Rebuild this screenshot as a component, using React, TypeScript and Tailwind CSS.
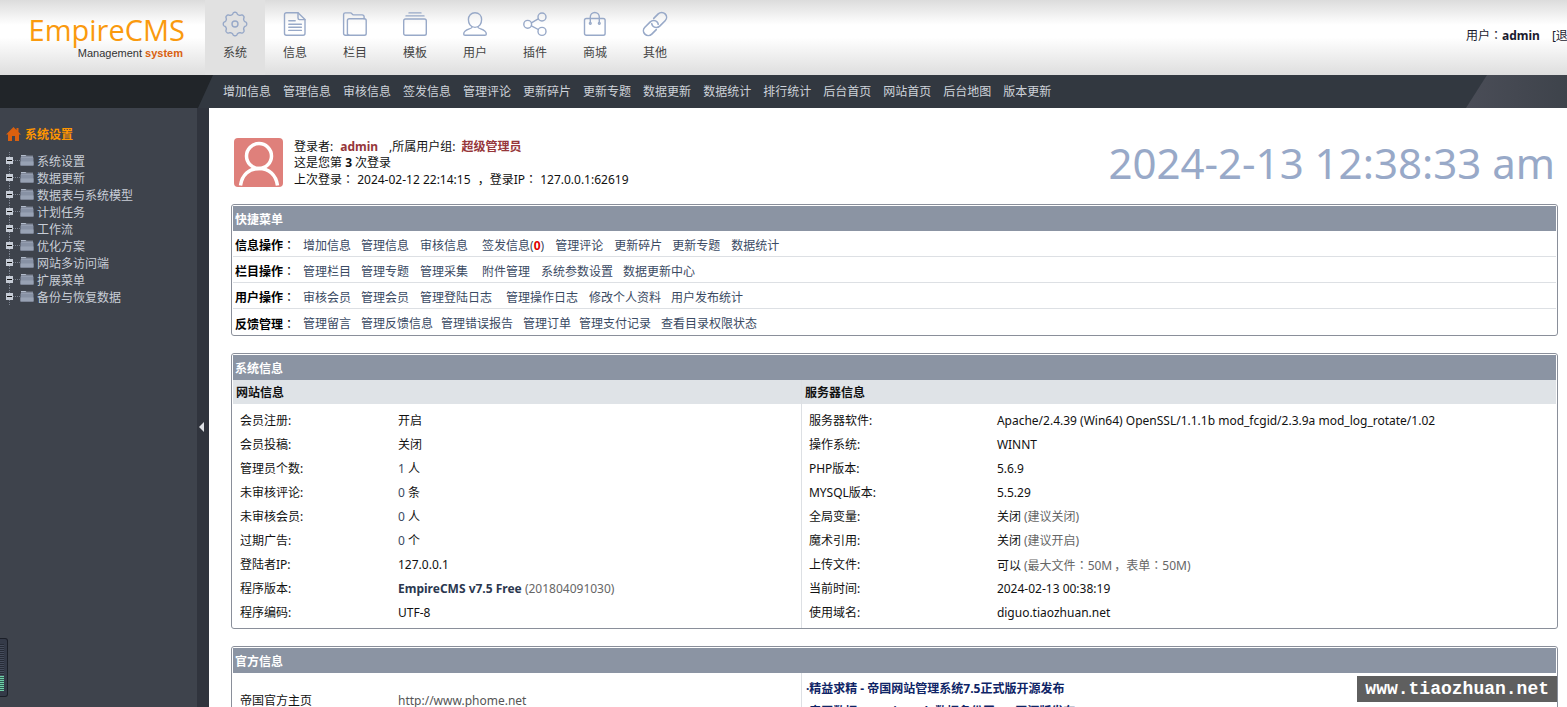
import type { ReactNode } from "react";

type Pair = { label: string; value: ReactNode };
type QuickLink = { text: string; gap: string; count?: number };

const modules = ["系统", "信息", "栏目", "模板", "用户", "插件", "商城", "其他"];

const subMenu = [
  "增加信息",
  "管理信息",
  "审核信息",
  "签发信息",
  "管理评论",
  "更新碎片",
  "更新专题",
  "数据更新",
  "数据统计",
  "排行统计",
  "后台首页",
  "网站首页",
  "后台地图",
  "版本更新",
];

const treeItems = [
  "系统设置",
  "数据更新",
  "数据表与系统模型",
  "计划任务",
  "工作流",
  "优化方案",
  "网站多访问端",
  "扩展菜单",
  "备份与恢复数据",
];

const quickMenu: { label: string; links: QuickLink[] }[] = [
  {
    label: "信息操作",
    links: [
      { text: "增加信息", gap: "" },
      { text: "管理信息", gap: "ml-[10px]" },
      { text: "审核信息", gap: "ml-[11px]" },
      { text: "签发信息", gap: "ml-[14px]", count: 0 },
      { text: "管理评论", gap: "ml-[11px]" },
      { text: "更新碎片", gap: "ml-[11px]" },
      { text: "更新专题", gap: "ml-[10px]" },
      { text: "数据统计", gap: "ml-[11px]" },
    ],
  },
  {
    label: "栏目操作",
    links: [
      { text: "管理栏目", gap: "" },
      { text: "管理专题", gap: "ml-[10px]" },
      { text: "管理采集", gap: "ml-[11px]" },
      { text: "附件管理", gap: "ml-[14px]" },
      { text: "系统参数设置", gap: "ml-[11px]" },
      { text: "数据更新中心", gap: "ml-[10px]" },
    ],
  },
  {
    label: "用户操作",
    links: [
      { text: "审核会员", gap: "" },
      { text: "管理会员", gap: "ml-[10px]" },
      { text: "管理登陆日志", gap: "ml-[11px]" },
      { text: "管理操作日志", gap: "ml-[14px]" },
      { text: "修改个人资料", gap: "ml-[11px]" },
      { text: "用户发布统计", gap: "ml-[10px]" },
    ],
  },
  {
    label: "反馈管理",
    links: [
      { text: "管理留言", gap: "" },
      { text: "管理反馈信息", gap: "ml-[10px]" },
      { text: "管理错误报告", gap: "ml-[8px]" },
      { text: "管理订单", gap: "ml-[10px]" },
      { text: "管理支付记录", gap: "ml-[8px]" },
      { text: "查看目录权限状态", gap: "ml-[10px]" },
    ],
  },
];

// full-width colons sit in the middle of their cell in this face
function Punct({ children }: { children: string }) {
  return <span className="font-['Noto_Sans_CJK_TC']">{children}</span>;
}

function Count({ n, unit }: { n: number; unit: string }) {
  return (
    <>
      <a href="#" className="text-[#3a4a63]">
        {n}
      </a>{" "}
      {unit}
    </>
  );
}

const siteInfo: Pair[] = [
  { label: "会员注册:", value: "开启" },
  { label: "会员投稿:", value: "关闭" },
  { label: "管理员个数:", value: <Count n={1} unit="人" /> },
  { label: "未审核评论:", value: <Count n={0} unit="条" /> },
  { label: "未审核会员:", value: <Count n={0} unit="人" /> },
  { label: "过期广告:", value: <Count n={0} unit="个" /> },
  { label: "登陆者IP:", value: "127.0.0.1" },
  {
    label: "程序版本:",
    value: (
      <>
        <a href="#" className="font-bold text-[#2b3850]">
          EmpireCMS v7.5 Free
        </a>{" "}
        <span className="text-[#666]">(201804091030)</span>
      </>
    ),
  },
  { label: "程序编码:", value: "UTF-8" },
];

const serverInfo: Pair[] = [
  {
    label: "服务器软件:",
    value: "Apache/2.4.39 (Win64) OpenSSL/1.1.1b mod_fcgid/2.3.9a mod_log_rotate/1.02",
  },
  { label: "操作系统:", value: "WINNT" },
  { label: "PHP版本:", value: "5.6.9" },
  { label: "MYSQL版本:", value: "5.5.29" },
  {
    label: "全局变量:",
    value: (
      <>
        关闭 <span className="text-[#666]">(建议关闭)</span>
      </>
    ),
  },
  {
    label: "魔术引用:",
    value: (
      <>
        关闭 <span className="text-[#666]">(建议开启)</span>
      </>
    ),
  },
  {
    label: "上传文件:",
    value: (
      <>
        可以{" "}
        <span className="text-[#666]">
          (最大文件<Punct>：</Punct>50M<span className="pl-[2px]">，</span>表单<Punct>：</Punct>50M)
        </span>
      </>
    ),
  },
  { label: "当前时间:", value: "2024-02-13 00:38:19" },
  { label: "使用域名:", value: "diguo.tiaozhuan.net" },
];

// eight rounded teeth around the centre
const gearPoints = Array.from({ length: 160 }, (_, i) => {
  const a = (i / 160) * Math.PI * 2;
  const r = 10.7 + 1.1 * Math.tanh(1.6 * Math.cos(8 * a));
  return `${(12 + r * Math.cos(a)).toFixed(2)},${(12 + r * Math.sin(a)).toFixed(2)}`;
}).join(" ");

const moduleIcons: ReactNode[] = [
  <>
    <polygon points={gearPoints} />
    <circle cx="12" cy="12" r="3" />
  </>,
  <>
    <path d="M15 .8H3.4A1.9 1.9 0 0 0 1.5 2.7v18.6a1.9 1.9 0 0 0 1.9 1.9h16.7a1.9 1.9 0 0 0 1.9-1.9V7.6z" />
    <path d="M15 .8v5.3a1.5 1.5 0 0 0 1.5 1.5H22M5.8 8.8h6.4M5.8 12.2h12.6M5.8 15.3h12.6M5.8 18.4h12.6" />
  </>,
  <>
    <rect x="4.4" y="6.8" width="18.8" height="16.4" rx="1.8" />
    <path d="M6 23.2H2.3A1.7 1.7 0 0 1 .6 21.5V2.6A1.7 1.7 0 0 1 2.3.9h5.2c1.6 0 1.4 2 3 2h8.8a1.8 1.8 0 0 1 1.8 1.8v2" />
  </>,
  <>
    <rect x=".7" y="7" width="22.6" height="16.2" rx="1.8" />
    <path d="M3 3.9h18M6 .9h12" />
  </>,
  <>
    <path d="M12 .8c4 0 6.6 2.7 6.6 6.8 0 3.7-2 7.8-6.6 7.8S5.4 11.3 5.4 7.6C5.4 3.5 8 .8 12 .8z" />
    <path d="M9 15c.4 2.2-8.2 1.6-8.3 6.9 0 .9.6 1.3 1.4 1.3h19.8c.8 0 1.4-.4 1.4-1.3C23.2 16.6 14.6 17.2 15 15" />
  </>,
  <>
    <circle cx="4.7" cy="12.3" r="3.9" />
    <circle cx="19" cy="5" r="4" />
    <circle cx="19" cy="19.4" r="4" />
    <path d="M8.4 10.8 15.2 6.9M8.4 13.8l6.9 3.7" />
  </>,
  <>
    <rect x="1.5" y="6.5" width="20.6" height="16.7" rx="1.8" />
    <path d="M7.3 10.2V5a4.5 4.5 0 0 1 9 0v5.2" />
    <circle cx="7.3" cy="11.3" r=".9" />
    <circle cx="16.3" cy="11.3" r=".9" />
  </>,
  <g transform="translate(-1.8 -1.8) scale(1.15)">
    <path d="M9.2 11.8a4.4 4.4 0 0 0 .9 1.9 4.2 4.2 0 0 0 6 .2l4.7-4.7a4.2 4.2 0 0 0-6-6l-3.9 3.9" />
    <path d="M14.8 12.2a4.4 4.4 0 0 0-.9-1.9 4.2 4.2 0 0 0-6-.2l-4.7 4.7a4.2 4.2 0 0 0 6 6l3.9-3.9" />
  </g>,
];

function TopBar() {
  return (
    <header className="flex h-[75px] overflow-hidden bg-[linear-gradient(#dcdcdc,#ffffff_33%,#ffffff_50%,#dedede)]">
      <div className="flex w-[205px] shrink-0 flex-col items-end pt-3 pr-5">
        <span className="font-['Open_Sans'] text-[29px] leading-9 font-medium text-[#fa9a0e]">EmpireCMS</span>
        <span className="pr-[2px] font-['Liberation_Sans'] text-[11px] leading-[11px] text-[#333]">
          Management <b className="text-[#d9600f]">system</b>
        </span>
      </div>
      <nav className="flex flex-1">
        {modules.map((name, i) => (
          <a
            key={name}
            href="#"
            className={
              "flex w-[60px] flex-col items-center gap-2 pt-3 text-[#444] " +
              (i === 0 ? "bg-[#e1e1e1]" : "")
            }
          >
            <svg
              viewBox="0 0 24 24"
              className="size-6 overflow-visible"
              fill="none"
              stroke="#98a9c8"
              strokeWidth="1.4"
              strokeLinecap="round"
              strokeLinejoin="round"
            >
              {moduleIcons[i]}
            </svg>
            <span className="leading-[18px]">{name}</span>
          </a>
        ))}
      </nav>
      <div className="w-[101px] shrink-0 overflow-hidden pt-[27px] leading-4 whitespace-nowrap text-[#1a1a2e]">
        用户<Punct>：</Punct>
        <a href="#" className="font-bold">
          admin
        </a>
        <a href="#" className="ml-3">
          [退出]
        </a>
      </div>
    </header>
  );
}

function SubNav() {
  return (
    <nav className="flex h-[33px] items-center bg-[#323840] text-[#ced3da]">
      <div className="mr-[10px] h-full w-[213px] shrink-0 bg-[#212529] [clip-path:polygon(0_0,100%_0,198px_100%,0_100%)]" />
      <div className="flex flex-1 gap-3 pt-px whitespace-nowrap">
        {subMenu.map((name) => (
          <a key={name} href="#">
            {name}
          </a>
        ))}
      </div>
      <div className="h-full w-[101px] shrink-0 bg-linear-to-r from-[#4a4d57] to-[#3e434b] [clip-path:polygon(21px_0,100%_0,100%_100%,0_100%)]" />
    </nav>
  );
}

function FolderIcon() {
  return (
    <svg viewBox="0 0 14 12" className="mb-[2px] h-3 w-[14px]">
      <path d="M1 1h4.5l1 .8h6.5V4H1z" fill="#b3bccb" />
      <path d="M.5 3.5h13v8H.5z" fill="#8791a4" />
      <path d="M.5 7.5h13v4H.5z" fill="#98a2b4" />
      <path d="M1 2.7h12" stroke="#636c7d" strokeWidth=".8" />
    </svg>
  );
}

function Sidebar() {
  return (
    <aside className="relative w-[197px] shrink-0 bg-[#3e434c] pt-4 text-[#c9ced7]">
      <h2 className="flex h-5 items-center gap-1 pl-[6px] font-bold text-[#ff9600]">
        <svg viewBox="0 0 15 14" className="h-[14px] w-[15px]" fill="#d9600f">
          <path d="M7.5 0 0 7.5h2V14h4V9h3v5h4V7.5h2L12.5 5V1h-2v2z" />
        </svg>
        <span className="pt-[2px]">系统设置</span>
      </h2>
      <ul className="pt-2 pl-[6px]">
        {treeItems.map((name) => (
          <li key={name} className="flex h-[17px] items-center">
            <svg viewBox="0 0 14 17" className="h-[17px] w-[14px]">
              <path d="M3.5 0v17M7 8.5h7" stroke="#7b828f" strokeDasharray="1 1" />
              <rect y="5" width="7" height="7" fill="#c5cbd5" />
              <path d="M1 8.5h5" stroke="#111" />
            </svg>
            <FolderIcon />
            <a href="#" className="pt-[2px] pl-[3px]">
              {name}
            </a>
          </li>
        ))}
      </ul>
      <div className="absolute bottom-[10px] left-0 flex h-[59px] w-2 items-center rounded-r-[3px] border border-l-0 border-[#1b1f28] bg-[#343a48]">
        <div className="flex h-[47px] w-1 flex-col">
          <div className="flex-1 bg-[repeating-linear-gradient(#262b36_0_1px,#454c5c_1px_2px)]" />
          <div className="h-[15px] bg-[repeating-linear-gradient(#6fd0a8_0_1px,#2e5a52_1px_2px)]" />
        </div>
      </div>
    </aside>
  );
}

function Panel({ title, children }: { title: string; children: ReactNode }) {
  return (
    <section className="rounded-[3px] border border-[#8a8f9a] px-px pt-px">
      <h3 className="h-[25px] bg-[#8b94a3] pl-[2px] leading-[27px] font-bold text-white">{title}</h3>
      {children}
    </section>
  );
}

function InfoTable({ title, rows, labelWidth }: { title: string; rows: Pair[]; labelWidth: string }) {
  return (
    <div className="flex flex-col">
      <h4 className="h-6 bg-[#dfe3e7] pl-[3px] leading-[26px] font-bold">{title}</h4>
      <div className="flex-1 pt-[5px] pb-[3px] pl-[7px]">
        <table className="w-full table-fixed text-left">
          <tbody>
            {rows.map((row) => (
              <tr key={row.label} className="h-6">
                <th scope="row" className={"font-normal " + labelWidth}>
                  {row.label}
                </th>
                <td className="whitespace-nowrap">{row.value}</td>
              </tr>
            ))}
          </tbody>
        </table>
      </div>
    </div>
  );
}

function Welcome() {
  return (
    <div className="flex h-[49px] items-center px-[3px]">
      <svg viewBox="0 0 49 49" className="size-[49px] rounded-[4px] bg-[#df807b]" fill="none" stroke="#fff">
        <circle cx="25" cy="18" r="12.5" strokeWidth="3.5" />
        <path d="M6.5 47.5C8 37 15 30.5 25 30.5S42 37 43.5 47.5" strokeWidth="3.5" />
      </svg>
      <div className="flex-1 pt-px pl-[11px] leading-4">
        <p>
          登录者:
          <a href="#" className="ml-[7px] font-bold text-[#96363a]">
            admin
          </a>
          <span className="ml-[11px]">,所属用户组:</span>
          <b className="ml-[6px] text-[#96363a]">超级管理员</b>
        </p>
        <p>
          这是您第 <b>3</b> 次登录
        </p>
        <p>
          上次登录<Punct>：</Punct> 2024-02-12 22:14:15 <span className="pl-1">，</span>登录IP
          <Punct>：</Punct> 127.0.0.1:62619
        </p>
      </div>
      <time className="text-[42px] leading-[49px] whitespace-nowrap text-[#98a9c8]">2024-2-13 12:38:33 am</time>
    </div>
  );
}

export default function App() {
  return (
    <div className="flex h-screen flex-col overflow-hidden bg-white font-['Noto_Sans','Noto_Sans_CJK_SC',sans-serif] text-[12px] leading-4 text-[#111]">
      <TopBar />
      <SubNav />
      <div className="flex min-h-0 flex-1">
        <Sidebar />
        <div className="flex w-3 shrink-0 items-center bg-[#30343d] pt-[38px] pl-[2px]">
          <button type="button" aria-label="收起菜单">
            <svg viewBox="0 0 5 10" className="h-[10px] w-[5px]" fill="#dfe2e6">
              <path d="M5 0v10L0 5z" />
            </svg>
          </button>
        </div>
        <main className="flex min-w-0 flex-1 flex-col gap-[17px] overflow-hidden pt-[30px] pr-[9px] pl-[22px] *:shrink-0">
          <Welcome />

          <Panel title="快捷菜单">
            {quickMenu.map((row) => (
              <div
                key={row.label}
                className="flex h-[26px] items-center border-b border-[#dde0e4] pt-1 pl-[2px] text-[#3a4a63] last:border-b-0"
              >
                <span className="w-[68px] text-black">
                  <b>{row.label}</b>
                  <Punct>：</Punct>
                </span>
                {row.links.map((link) => (
                  <a key={link.text} href="#" className={link.gap}>
                    {link.text}
                    {link.count !== undefined && (
                      <>
                        (<b className="text-[#e00000]">{link.count}</b>)
                      </>
                    )}
                  </a>
                ))}
              </div>
            ))}
          </Panel>

          <Panel title="系统信息">
            <div className="grid grid-cols-[43%_57%]">
              <div className="border-r border-[#dde0e4]">
                <InfoTable title="网站信息" rows={siteInfo} labelWidth="w-[158px]" />
              </div>
              <InfoTable title="服务器信息" rows={serverInfo} labelWidth="w-[188px]" />
            </div>
          </Panel>

          <Panel title="官方信息">
            <div className="grid grid-cols-[43%_57%]">
              <div className="flex h-14 items-center border-r border-[#dde0e4] pl-[7px]">
                <span className="w-[158px]">帝国官方主页</span>
                <a href="#" className="text-[#555]">
                  http://www.phome.net
                </a>
              </div>
              <ul className="pt-1 pl-1 leading-[23px] font-bold text-[#0e2466]">
                <li>
                  ·<a href="#">精益求精 - 帝国网站管理系统7.5正式版开源发布</a>
                </li>
                <li>
                  ·<a href="#">帝国数据 - EmpireBak 数据备份王5.1 开源版发布</a>
                </li>
              </ul>
            </div>
          </Panel>
        </main>
      </div>
      <div className="fixed right-[10px] bottom-[5px] h-[26px] bg-[#5f5f5f] px-2 font-['Liberation_Mono'] text-[18px] leading-[26px] font-bold text-white">
        www.tiaozhuan.net
      </div>
    </div>
  );
}
